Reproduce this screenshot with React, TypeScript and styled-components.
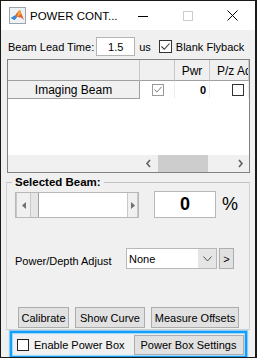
import React from "react";
import styled, { createGlobalStyle } from "styled-components";

const Global = createGlobalStyle`
  html, body { margin: 0; padding: 0; background: #1c1a18; }
  body { font-family: "Liberation Sans", Arial, sans-serif; font-size: 11px; color: #000; }
  #root { padding: 1px 0 0 1px; }
`;

const Window = styled.div`
  width: 254px;
  height: 356px;
  background: #f0f0f0;
  display: flex;
  flex-direction: column;
  overflow: hidden;
`;

const TitleBar = styled.div`
  height: 29px;
  background: #ffffff;
  display: flex;
  align-items: center;
  padding-left: 8px;
  flex-shrink: 0;
`;

const TitleText = styled.div`
  font-size: 11.5px;
  margin-left: 4px;
  flex: 1;
  white-space: nowrap;
  padding-top: 1px;
`;

const CaptionButton = styled.div`
  width: 45px;
  height: 29px;
  display: flex;
  align-items: center;
  justify-content: center;
`;

const Content = styled.div`
  display: flex;
  flex-direction: column;
  flex: 1;
`;

const LeadRow = styled.div`
  display: flex;
  align-items: center;
  height: 19px;
  margin-top: 7px;
  padding-left: 7px;
`;

const Label = styled.span<{ $ml?: number }>`
  font-size: 11px;
  white-space: nowrap;
  margin-left: ${(p) => p.$ml ?? 0}px;
`;

const TextField = styled.div`
  width: 39px;
  height: 19px;
  box-sizing: border-box;
  margin-left: 2px;
  background: #fff;
  border: 1px solid #b4b4b4;
  display: flex;
  align-items: center;
  justify-content: center;
  font-size: 11px;
`;

const Box = styled.div<{ $size: number; $border: string; $ml?: number }>`
  width: ${(p) => p.$size}px;
  height: ${(p) => p.$size}px;
  box-sizing: border-box;
  border: 1px solid ${(p) => p.$border};
  background: #fff;
  margin-left: ${(p) => p.$ml ?? 0}px;
  display: flex;
  align-items: center;
  justify-content: center;
  flex-shrink: 0;
`;

const Table = styled.div`
  margin: 3px 0 0 6px;
  width: 243px;
  height: 114px;
  box-sizing: border-box;
  border: 1px solid #828282;
  display: flex;
  flex-direction: column;
  background: #fff;
  overflow: hidden;
`;

const Grid = styled.div`
  display: grid;
  grid-template-columns: 132px 35px 35px 1fr;
`;

const HeadCell = styled.div<{ $left?: boolean }>`
  height: 19px;
  background: #f0f0f0;
  border-bottom: 1px solid #a0a0a0;
  border-right: 1px solid #c8c8c8;
  font-size: 12px;
  display: flex;
  align-items: center;
  justify-content: ${(p) => (p.$left ? "flex-start" : "center")};
  padding-left: ${(p) => (p.$left ? 7 : 0)}px;
  white-space: nowrap;
  overflow: hidden;
  padding-top: 1px;
  box-sizing: content-box;
`;

const RowHead = styled.div`
  height: 17px;
  background: #f0f0f0;
  border-bottom: 1px solid #a0a0a0;
  border-right: 1px solid #a0a0a0;
  font-size: 12px;
  display: flex;
  align-items: center;
  justify-content: center;
`;

const DataCell = styled.div<{ $align?: string }>`
  height: 17px;
  border-right: 1px solid #ececec;
  display: flex;
  align-items: center;
  justify-content: ${(p) => p.$align ?? "center"};
  padding-right: ${(p) => (p.$align === "flex-end" ? 3 : 0)}px;
  font-size: 11px;
  font-weight: bold;
`;

const Filler = styled.div`
  flex: 1;
  background: #fff;
`;

const ScrollRow = styled.div`
  height: 17px;
  display: grid;
  grid-template-columns: 132px 1fr;
  background: #f0f0f0;
`;

const HScroll = styled.div`
  display: flex;
  align-items: center;
  background: #f0f0f0;
`;

const ScrollArrow = styled.div`
  width: 17px;
  height: 17px;
  display: flex;
  align-items: center;
  justify-content: center;
`;

const ScrollTrack = styled.div`
  flex: 1;
  height: 17px;
  display: flex;
  align-items: center;
`;

const ScrollThumb = styled.div`
  width: 50px;
  height: 17px;
  margin-left: 1px;
  background: #cdcdcd;
`;

const Panel = styled.div`
  position: relative;
  margin: 9px 0 0 5px;
  width: 244px;
  box-sizing: border-box;
  border: 1px solid #d0d0d0;
  border-top-color: #c4c4c4;
  padding: 8px 0 0 8px;
  display: flex;
  flex-direction: column;
`;

const Legend = styled.div`
  position: absolute;
  top: -7px;
  left: 5px;
  padding: 0 3px;
  background: #f0f0f0;
  font-size: 11.5px;
  font-weight: bold;
  line-height: 13px;
`;

const SliderRow = styled.div`
  display: flex;
  align-items: flex-start;
  height: 27px;
`;

const Slider = styled.div`
  margin-top: 1px;
  width: 124px;
  height: 26px;
  box-sizing: border-box;
  border: 1px solid #b8b8b8;
  background: #fff;
  display: flex;
`;

const SliderButton = styled.div<{ $w: number }>`
  width: ${(p) => p.$w}px;
  background: #f0f0f0;
  display: flex;
  align-items: center;
  justify-content: center;
  border-right: 1px solid #c8c8c8;
  border-left: 1px solid #c8c8c8;
  box-sizing: border-box;
`;

const SliderThumb = styled.div`
  width: 8px;
  background: #e6e6e6;
  border-right: 1px solid #a0a0a0;
  box-sizing: border-box;
`;

const SliderTrack = styled.div`
  flex: 1;
  background: #fff;
`;

const ValueBox = styled.div`
  margin-left: 15px;
  width: 62px;
  height: 27px;
  box-sizing: border-box;
  background: #fff;
  border: 1px solid #b8b8b8;
  display: flex;
  align-items: center;
  justify-content: center;
  font-size: 18px;
  font-weight: bold;
`;

const Percent = styled.div`
  margin-left: 6px;
  font-size: 18px;
  line-height: 27px;
`;

const AdjustRow = styled.div`
  display: flex;
  align-items: flex-start;
  margin-top: 30px;
  height: 21px;
`;

const AdjustLabel = styled.div`
  font-size: 11px;
  width: 111px;
  padding-top: 7px;
  white-space: nowrap;
`;

const Select = styled.div`
  width: 91px;
  height: 21px;
  box-sizing: border-box;
  border: 1px solid #b8b8b8;
  background: #fff;
  display: flex;
`;

const SelectText = styled.div`
  flex: 1;
  font-size: 11px;
  padding-left: 2px;
  display: flex;
  align-items: center;
`;

const SelectArrow = styled.div`
  width: 18px;
  background: #e5e5e5;
  display: flex;
  align-items: center;
  justify-content: center;
`;

const Button = styled.div<{ $w: number; $ml?: number; $h?: number }>`
  width: ${(p) => p.$w}px;
  height: ${(p) => p.$h ?? 21}px;
  margin-left: ${(p) => p.$ml ?? 0}px;
  box-sizing: border-box;
  background: #e1e1e1;
  border: 1px solid #adadad;
  display: flex;
  align-items: center;
  justify-content: center;
  font-size: 11px;
  white-space: nowrap;
  flex-shrink: 0;
`;

const ButtonRow = styled.div`
  display: flex;
  margin-top: 38px;
  margin-bottom: 1px;
  padding-left: 3px;
`;

const Highlight = styled.div`
  margin: 1px 0 0 9px;
  width: 237px;
  height: 27px;
  box-sizing: border-box;
  border: 2px solid #149ef5;
  box-shadow: 0 0 1px 1px #86cdfb, inset 0 0 1px 1px #9ad7fc;
  display: flex;
  align-items: center;
  padding-left: 5px;
`;

const MatlabIcon = () => (
  <svg width="17" height="17" viewBox="0 0 17 17">
    <rect x="0.5" y="0.5" width="16" height="16" fill="#eef2f6" stroke="#9aa4ae" />
    <path d="M2 11 L6 8.5 L8 10 L5.5 13 Z" fill="#2f6cc0" />
    <path d="M6 8.5 L9.5 4 L11 3 L13 8 L15 13 L12 10.5 L8 10 Z" fill="#e0602a" />
    <path d="M9.5 4 L11 3 L12 7 L10 9 L8 10 Z" fill="#f3a43a" />
    <path d="M2 11 L5.5 13 L8 10 L6 8.5 Z" fill="#3e86d8" />
  </svg>
);

const Check = ({ color }: { color: string }) => (
  <svg width="11" height="11" viewBox="0 0 11 11">
    <path d="M1.5 5.5 L4.3 8.3 L9.5 2.5" fill="none" stroke={color} strokeWidth="1.1" />
  </svg>
);

const Chevron = ({ dir }: { dir: "l" | "r" }) => (
  <svg width="7" height="9" viewBox="0 0 7 9">
    <path
      d={dir === "l" ? "M5 1 L2 4.5 L5 8" : "M2 1 L5 4.5 L2 8"}
      fill="none"
      stroke="#606060"
      strokeWidth="1.6"
    />
  </svg>
);

const Tri = ({ dir }: { dir: "l" | "r" }) => (
  <svg width="4" height="7" viewBox="0 0 4 7">
    <path d={dir === "l" ? "M4 0 L0 3.5 L4 7 Z" : "M0 0 L4 3.5 L0 7 Z"} fill="#707070" />
  </svg>
);

export default function App() {
  return (
    <>
      <Global />
      <Window>
        <TitleBar>
          <MatlabIcon />
          <TitleText>POWER CONT...</TitleText>
          <CaptionButton>
            <svg width="10" height="10" viewBox="0 0 10 10">
              <path d="M0 5.5 H10" stroke="#000" strokeWidth="1" />
            </svg>
          </CaptionButton>
          <CaptionButton>
            <svg width="10" height="10" viewBox="0 0 10 10">
              <rect x="0.5" y="0.5" width="9" height="9" fill="none" stroke="#cccccc" />
            </svg>
          </CaptionButton>
          <CaptionButton>
            <svg width="11" height="11" viewBox="0 0 11 11">
              <path d="M0.5 0.5 L10.5 10.5 M10.5 0.5 L0.5 10.5" stroke="#000" strokeWidth="1" />
            </svg>
          </CaptionButton>
        </TitleBar>
        <Content>
          <LeadRow>
            <Label>Beam Lead Time:</Label>
            <TextField>1.5</TextField>
            <Label $ml={4}>us</Label>
            <Box $size={13} $border="#333" $ml={8}>
              <Check color="#333" />
            </Box>
            <Label $ml={4}>Blank Flyback</Label>
          </LeadRow>
          <Table>
            <Grid>
              <HeadCell />
              <HeadCell />
              <HeadCell>Pwr</HeadCell>
              <HeadCell $left>P/z Adjust</HeadCell>
            </Grid>
            <Grid>
              <RowHead>Imaging Beam</RowHead>
              <DataCell>
                <Box $size={12} $border="#9a9a9a" $ml={2}>
                  <Check color="#777" />
                </Box>
              </DataCell>
              <DataCell $align="flex-end">0</DataCell>
              <DataCell $align="flex-start">
                <Box $size={12} $border="#333" $ml={22} />
              </DataCell>
            </Grid>
            <Filler />
            <ScrollRow>
              <div />
              <HScroll>
                <ScrollArrow>
                  <Chevron dir="l" />
                </ScrollArrow>
                <ScrollTrack>
                  <ScrollThumb />
                </ScrollTrack>
                <ScrollArrow>
                  <Chevron dir="r" />
                </ScrollArrow>
              </HScroll>
            </ScrollRow>
          </Table>
          <Panel>
            <Legend>Selected Beam:</Legend>
            <SliderRow>
              <Slider>
                <SliderButton $w={15}>
                  <Tri dir="l" />
                </SliderButton>
                <SliderThumb />
                <SliderTrack />
                <SliderButton $w={11}>
                  <Tri dir="r" />
                </SliderButton>
              </Slider>
              <ValueBox>0</ValueBox>
              <Percent>%</Percent>
            </SliderRow>
            <AdjustRow>
              <AdjustLabel>Power/Depth Adjust</AdjustLabel>
              <Select>
                <SelectText>None</SelectText>
                <SelectArrow>
                  <svg width="9" height="6" viewBox="0 0 9 6">
                    <path d="M0.5 0.5 L4.5 5 L8.5 0.5" fill="none" stroke="#555" strokeWidth="1" />
                  </svg>
                </SelectArrow>
              </Select>
              <Button $w={15} $ml={2}>&gt;</Button>
            </AdjustRow>
            <ButtonRow>
              <Button $w={51}>Calibrate</Button>
              <Button $w={70} $ml={6}>Show Curve</Button>
              <Button $w={88} $ml={6}>Measure Offsets</Button>
            </ButtonRow>
          </Panel>
          <Highlight>
            <Box $size={12} $border="#222" />
            <Label $ml={5}>Enable Power Box</Label>
            <Button $w={110} $ml={9} $h={20}>Power Box Settings</Button>
          </Highlight>
        </Content>
      </Window>
    </>
  );
}
